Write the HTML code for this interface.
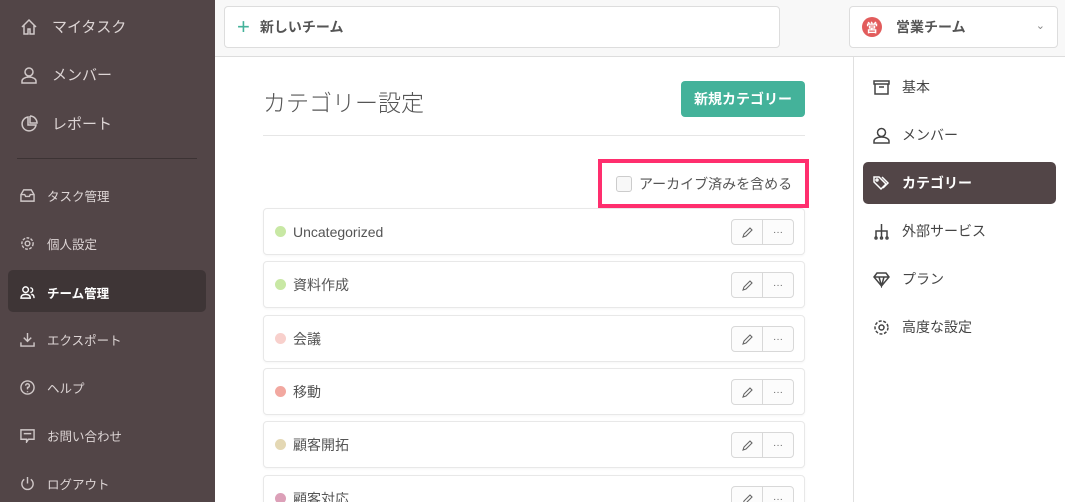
<!DOCTYPE html>
<html style="width:1065px;height:502px;overflow:hidden"><head><meta charset="utf-8"><style>
*{box-sizing:border-box;margin:0;padding:0}
html,body{width:1065px;height:502px;overflow:hidden}
body{position:relative;background:#fff;font-family:"Liberation Sans","Noto Sans CJK JP",sans-serif;color:#444}
.side{position:absolute;left:0;top:0;width:215px;height:502px;background:#524547;color:#ddd5d5}
.si{position:absolute;left:20px;display:flex;align-items:center;font-size:15px}
.si svg{width:18px;height:18px;margin-right:14px;fill:none;stroke:#d0c8c8;stroke-width:1.5}
.sm{font-size:12.5px}
.sm svg{width:15px;height:15px;margin-right:12px}
.act{position:absolute;left:8px;top:270px;width:198px;height:42px;background:#3e3536;border-radius:5px}
.hdr{position:absolute;left:215px;top:0;width:850px;height:57px;background:#f8f8f8;border-bottom:1px solid #ddd}
.nt{position:absolute;left:224px;top:6px;width:556px;height:42px;background:#fff;border:1px solid #ddd;border-radius:4px;display:flex;align-items:center;padding-left:12px;font-size:14px;font-weight:bold;color:#555}
.team{position:absolute;left:849px;top:6px;width:209px;height:42px;background:#fff;border:1px solid #ddd;border-radius:4px;display:flex;align-items:center;padding-left:12px;font-size:14px;font-weight:bold;color:#555}
.title{position:absolute;left:263px;top:84px;font-size:23px;color:#555;font-family:"Noto Sans CJK JP",sans-serif;font-weight:300}
.nbtn{position:absolute;left:681px;top:81px;width:124px;height:36px;background:#44b29a;border-radius:4px;color:#fff;font-weight:bold;font-size:14px;display:flex;align-items:center;justify-content:center}
.hr{position:absolute;left:263px;top:135px;width:542px;height:1px;background:#e6e6e6}
.arch{position:absolute;left:598px;top:159px;width:211px;height:49px;border:4px solid #ff2e6e;display:flex;align-items:center;padding-left:14px;font-size:14px;color:#555}
.cb{width:16px;height:16px;border:1px solid #ccc;border-radius:3px;background:#f8f8f8;margin-right:7px}
.row{position:absolute;left:263px;width:542px;height:47px;border:1px solid #e8e8e8;border-radius:4px;box-shadow:0 1px 2px rgba(0,0,0,.04);display:flex;align-items:center;padding-left:11px;font-size:14px;color:#555;background:#fff}
.dot{width:11px;height:11px;border-radius:50%;margin-right:7px}
.btns{position:absolute;right:10px;top:10px;width:63px;height:26px;border:1px solid #d8d8d8;border-radius:4px;display:flex;background:#fcfcfc}
.btns div{flex:1;display:flex;align-items:center;justify-content:center;font-size:10px;color:#666}
.btns div:first-child{border-right:1px solid #d8d8d8}
.btns svg{width:13px;height:13px;fill:none;stroke:#666;stroke-width:1.1}
.rp{position:absolute;left:853px;top:57px;width:1px;height:445px;background:#e0e0e0}
.ri{position:absolute;left:873px;display:flex;align-items:center;font-size:14px;color:#444}
.ri svg{width:17px;height:17px;margin-right:12px;fill:none;stroke:#444;stroke-width:1.5}
.ract{position:absolute;left:863px;top:162px;width:193px;height:42px;background:#524547;border-radius:5px}
</style></head><body>
<div class="side">
<div class="si" style="top:16px"><svg viewBox="0 0 18 18"><path d="M2 9L9 2l7 7M4 7v9h4v-5h2v5h4V7"/></svg>マイタスク</div>
<div class="si" style="top:64px"><svg viewBox="0 0 18 18"><circle cx="9" cy="6" r="4"/><path d="M2 17v-2c0-2 3-4 7-4s7 2 7 4v2z"/></svg>メンバー</div>
<div class="si" style="top:113px"><svg viewBox="0 0 18 18"><path d="M8 2a7 7 0 1 0 8 8H8z"/><path d="M10 1v7h7a7 7 0 0 0-7-7"/></svg>レポート</div>
<div style="position:absolute;left:17px;top:158px;width:180px;height:1px;background:#3c3334"></div>
<div class="si sm" style="top:186px"><svg viewBox="0 0 16 16"><path d="M1 7l3-5h8l3 5v7H1z M1 7h4l1 2h4l1-2h4"/></svg>タスク管理</div>
<div class="si sm" style="top:234px"><svg viewBox="0 0 16 16"><circle cx="8" cy="8" r="2.5"/><circle cx="8" cy="8" r="6" stroke-dasharray="3 1.5"/></svg>個人設定</div>
<div class="act"></div>
<div class="si sm" style="top:283px;color:#fff;font-weight:bold"><svg viewBox="0 0 16 16" style="stroke:#fff"><circle cx="6" cy="5" r="3"/><path d="M1 14c0-3 2-4 5-4s5 1 5 4zM11 3a2.5 2.5 0 0 1 0 5M12 10c2 0 3 1 3 4"/></svg>チーム管理</div>
<div class="si sm" style="top:330px"><svg viewBox="0 0 16 16"><path d="M8 1v9M4 6l4 4 4-4M1 11v4h14v-4"/></svg>エクスポート</div>
<div class="si sm" style="top:378px"><svg viewBox="0 0 16 16"><circle cx="8" cy="8" r="7"/><path d="M6 6a2 2 0 1 1 2 2v2M8 12v1"/></svg>ヘルプ</div>
<div class="si sm" style="top:426px"><svg viewBox="0 0 16 16"><path d="M1 2h14v10H9l-2 3v-3H1z M4 6h8"/></svg>お問い合わせ</div>
<div class="si sm" style="top:474px"><svg viewBox="0 0 16 16"><path d="M8 1v7M4.5 3.5a6 6 0 1 0 7 0"/></svg>ログアウト</div>
</div>
<div class="hdr"></div>
<div class="nt"><span style="color:#44b29a;font-size:22px;font-weight:normal;margin-right:10px;line-height:1">+</span>新しいチーム</div>
<div class="team"><div style="width:20px;height:20px;border-radius:50%;background:#e25c5c;color:#fff;font-size:12px;display:flex;align-items:center;justify-content:center;margin-right:14px">営</div>営業チーム<span style="position:absolute;right:12px;top:12px;font-weight:normal;color:#888;font-size:11px">&#8964;</span></div>
<div class="title">カテゴリー設定</div>
<div class="nbtn">新規カテゴリー</div>
<div class="hr"></div>
<div class="arch"><div class="cb"></div>アーカイブ済みを含める</div>
<div class="row" style="top:208px"><div class="dot" style="background:#c8e8a4"></div>Uncategorized<div class="btns"><div><svg viewBox="0 0 13 13"><path d="M2 11l1-3 6-6 2 2-6 6z"/></svg></div><div>···</div></div></div>
<div class="row" style="top:261px"><div class="dot" style="background:#c8e8a4"></div>資料作成<div class="btns"><div><svg viewBox="0 0 13 13"><path d="M2 11l1-3 6-6 2 2-6 6z"/></svg></div><div>···</div></div></div>
<div class="row" style="top:315px"><div class="dot" style="background:#f8d0cc"></div>会議<div class="btns"><div><svg viewBox="0 0 13 13"><path d="M2 11l1-3 6-6 2 2-6 6z"/></svg></div><div>···</div></div></div>
<div class="row" style="top:368px"><div class="dot" style="background:#f2a8a0"></div>移動<div class="btns"><div><svg viewBox="0 0 13 13"><path d="M2 11l1-3 6-6 2 2-6 6z"/></svg></div><div>···</div></div></div>
<div class="row" style="top:421px"><div class="dot" style="background:#e4d8b4"></div>顧客開拓<div class="btns"><div><svg viewBox="0 0 13 13"><path d="M2 11l1-3 6-6 2 2-6 6z"/></svg></div><div>···</div></div></div>
<div class="row" style="top:475px"><div class="dot" style="background:#dca0b8"></div>顧客対応<div class="btns"><div><svg viewBox="0 0 13 13"><path d="M2 11l1-3 6-6 2 2-6 6z"/></svg></div><div>···</div></div></div>
<div class="rp"></div>
<div class="ri" style="top:77px"><svg viewBox="0 0 17 17"><path d="M1 2h15v3H1zM2 5v10h13V5M6 8h5"/></svg>基本</div>
<div class="ri" style="top:125px"><svg viewBox="0 0 17 17"><circle cx="8.5" cy="5.5" r="4"/><path d="M1 16v-2c0-2 3-4 7.5-4s7.5 2 7.5 4v2z"/></svg>メンバー</div>
<div class="ract"></div>
<div class="ri" style="top:173px;color:#fff;font-weight:bold"><svg viewBox="0 0 17 17" style="stroke:#fff"><path d="M1 2v5l7 7 5-5-7-7zM9 2l6 6-5 5"/><circle cx="4" cy="5" r="1"/></svg>カテゴリー</div>
<div class="ri" style="top:221px"><svg viewBox="0 0 17 17"><path d="M8.5 1v6M3 14V8h11v6M8.5 7v7"/><circle cx="3" cy="15" r="1"/><circle cx="8.5" cy="15" r="1"/><circle cx="14" cy="15" r="1"/></svg>外部サービス</div>
<div class="ri" style="top:269px"><svg viewBox="0 0 17 17"><path d="M1 6l3-4h9l3 4-7.5 9zM1 6h15M6 6l2.5 9L11 6"/></svg>プラン</div>
<div class="ri" style="top:317px"><svg viewBox="0 0 17 17"><circle cx="8.5" cy="8.5" r="2.5"/><circle cx="8.5" cy="8.5" r="6.5" stroke-dasharray="3 1.6"/></svg>高度な設定</div>
</body></html>
